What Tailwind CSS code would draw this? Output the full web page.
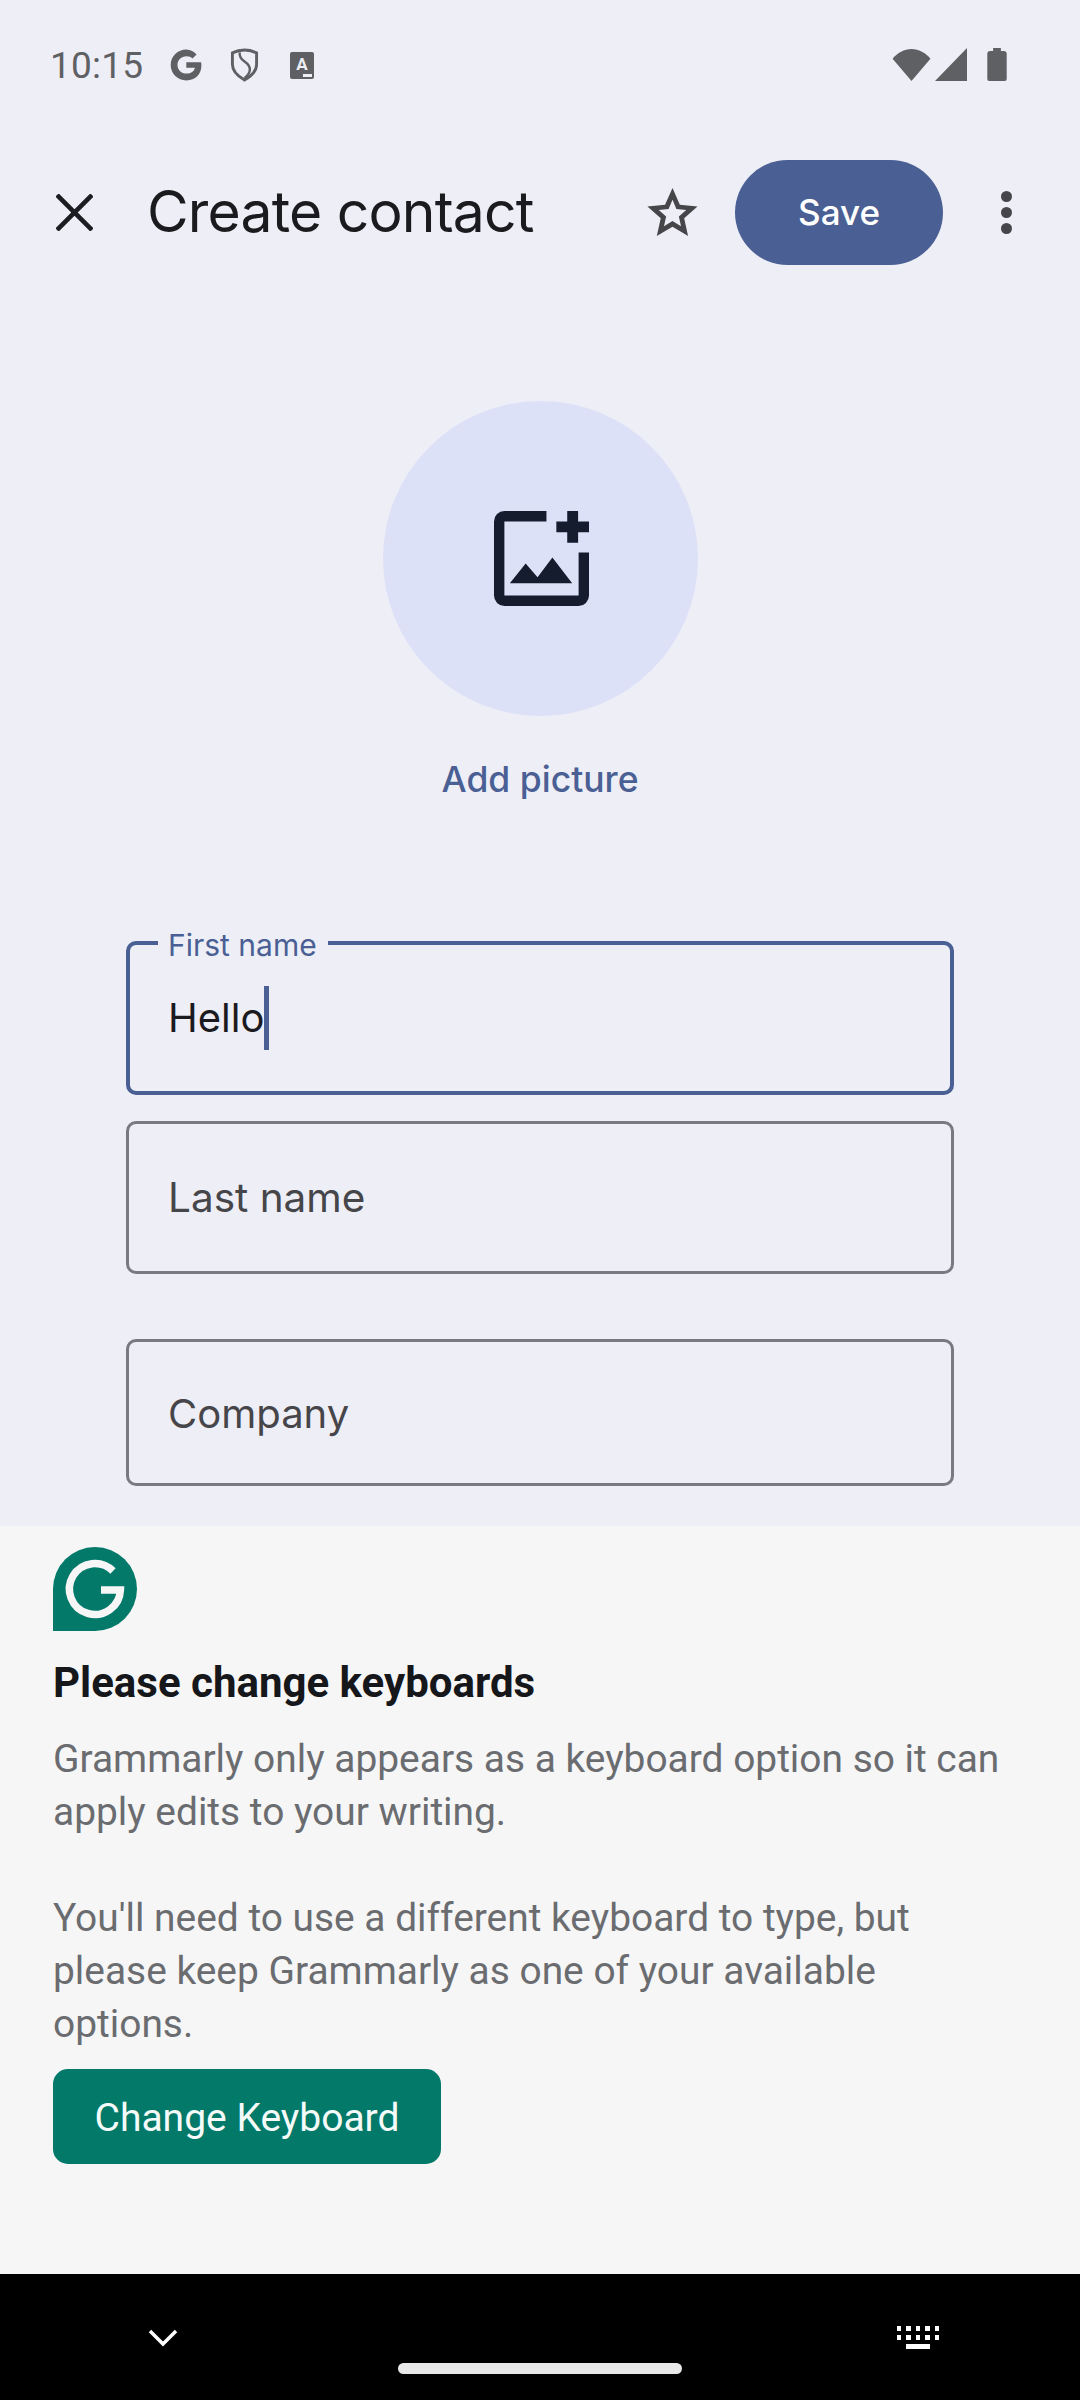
<!doctype html>
<html lang="en">
  <head>
    <meta charset="UTF-8" />
    <script src="https://cdn.jsdelivr.net/npm/@tailwindcss/browser@4"></script>
    <title>Create contact</title>
  </head>
  <body class="w-[1080px] h-[2400px] overflow-hidden flex flex-col bg-[#eeeef6] font-['Roboto',sans-serif]">
    <!-- contacts app, dimmed behind the grammarly panel -->
    <div class="h-[1526px] shrink-0 flex flex-col overflow-hidden">
      <div class="h-[130px] shrink-0 flex items-center pl-[50px] pr-[73px] text-[#5f6064]">
        <span class="text-[37px] tracking-[0.2px] w-[119px] pt-[2px]">10:15</span>
        <svg class="w-[34px] h-[34px]" viewBox="0 0 34 34"><path fill="#5f6064" d="M17.300 14.200v5.600h8.600c-.8 3.600-4 5.800-8.400 5.800-5.200 0-9-3.900-9-8.700s3.800-8.700 9-8.700c2.500 0 4.500.9 6 2.300l4.100-4.100C25 3.800 21.600 1.600 17.400 1.600 8.700 1.600 1.700 8.400 1.700 17s7 15.400 15.700 15.400c9 0 15-6.100 15-14.800 0-1.200-.1-2.400-.3-3.400z"/></svg>
        <svg class="w-[29px] h-[36px] ml-[27px]" viewBox="0 0 30 36" fill="none" stroke="#5f6064"><path stroke-width="3" d="M15 2.500c4 0 8.500 1 12.500 3v12c0 6.500-4.500 11.500-12.500 16C7 29 2.500 24 2.500 17.500v-12c4-2 8.500-3 12.500-3z"/><path stroke-width="2.500" d="M10 5c-.5 5 2 7.500 5 9.500s6 4.500 5.500 9c-.3 2-1.500 5-5.500 8"/></svg>
        <div class="relative w-[24px] h-[27px] ml-[31px] bg-[#5f6064] rounded-[2px] flex justify-center text-[#eeeef6] text-[17px] font-bold leading-[24px]">A<span class="absolute left-[13px] bottom-[2px] w-[9px] h-[3px] bg-[radial-gradient(circle,#eeeef6_1.5px,transparent_1.5px)] bg-[length:3px_3px]"></span></div>
        <div class="ml-auto flex items-center mt-[-2px]">
          <svg class="w-[39px] h-[33px]" viewBox="0 0 39 34"><path fill="#5f6064" d="M0 11C5 5 12 1 19.500 1S34 5 39 11L19.500 34z"/></svg>
          <svg class="w-[32px] h-[33px] ml-[4px]" viewBox="0 0 33 34"><path fill="#5f6064" d="M33 0v34H0z"/></svg>
          <svg class="w-[20px] h-[33px] ml-[20px]" viewBox="0 0 20 34"><path fill="#5f6064" d="M6 0h8v3h3a3 3 0 0 1 3 3v26a2 2 0 0 1-2 2H2a2 2 0 0 1-2-2V6a3 3 0 0 1 3-3h3z"/></svg>
        </div>
      </div>
      <div class="h-[105px] mt-[30px] shrink-0 flex items-center">
        <svg class="w-[37px] h-[37px] ml-[56px]" viewBox="0 0 36 36" stroke="#1c1d21" stroke-width="4.500" fill="none"><path d="M1 1l34 34M35 1L1 35"/></svg>
        <span class="ml-[54px] mt-[-2px] text-[57px] tracking-[-0.8px] text-[#1b1b1f] font-['Inter',sans-serif] w-[500px] whitespace-nowrap">Create contact</span>
        <svg class="w-[51px] h-[49px]" viewBox="0 0 52 50"><path fill="#46464a" fill-rule="evenodd" d="M26 0l7.500 17 18 1.800-13.600 12 4 18.200L26 39.500 10 49l4-18.200L.400 18.800l18-1.800zm0 12l-4 9.400-10 1 7.500 6.600-2.200 10L26 33.800l8.700 5.200-2.200-10 7.500-6.600-10-1z"/></svg>
        <div class="w-[208px] h-[105px] ml-[37px] rounded-full bg-[#4a5f93] text-white text-[35px] font-medium font-['Inter',sans-serif] flex items-center justify-center">Save</div>
        <div class="ml-[58px] flex flex-col gap-[5px]">
          <span class="w-[11px] h-[11px] rounded-full bg-[#46464a]"></span>
          <span class="w-[11px] h-[11px] rounded-full bg-[#46464a]"></span>
          <span class="w-[11px] h-[11px] rounded-full bg-[#46464a]"></span>
        </div>
      </div>
      <div class="flex flex-col items-center mt-[136px]">
        <div class="w-[315px] h-[315px] rounded-full bg-[#dde1f8] flex items-center justify-center">
          <svg class="w-[95px] h-[95px] ml-[2px]" viewBox="0 0 96 96" fill="#151c2e"><path d="M53 0v10.500H10.500v75h75V42H96v43.500A10.500 10.500 0 0 1 85.500 96h-75A10.500 10.500 0 0 1 0 85.500v-75A10.500 10.500 0 0 1 10.500 0z"/><path d="M74 0h11v10.500h11v11H85V32H74V21.500H63v-11h11z"/><path d="M16 73l16-20 12 14 15-20 20 26z"/></svg>
        </div>
        <span class="mt-[42px] text-[35.500px] font-medium text-[#4a5f93] font-['Inter',sans-serif] leading-[44px]">Add picture</span>
      </div>
      <div class="relative mx-[126px] mt-[139px] h-[154px] shrink-0 rounded-[10px] border-[4px] border-[#4a5f93] flex items-center pl-[38px] text-[40px] text-[#1b1b1f] font-['Inter',sans-serif]">
        <span class="absolute left-[28px] top-[-15px] w-[170px] h-[30px] pl-[10px] bg-[#eeeef6] text-[#4a5f93] text-[30px] leading-[30px]">First name</span>
        Hello<span class="w-[5px] h-[64px] bg-[#4a5f93]"></span>
      </div>
      <div class="mx-[126px] mt-[26px] h-[153px] shrink-0 rounded-[10px] border-[3px] border-[#79797f] flex items-center pl-[39px] pt-[2px] text-[40.500px] text-[#46464a] font-['Inter',sans-serif]">Last name</div>
      <div class="mx-[126px] mt-[65px] h-[147px] shrink-0 rounded-[10px] border-[3px] border-[#79797f] flex items-center pl-[39px] pt-[2px] text-[40px] text-[#46464a] font-['Inter',sans-serif]">Company</div>
    </div>
    <!-- grammarly panel -->
    <div class="h-[748px] shrink-0 bg-[#f6f6f7] pl-[53px] pt-[21px] flex flex-col items-start">
      <svg class="w-[84px] h-[84px]" viewBox="0 0 84 84"><path fill="#03796a" d="M0 84V42a42 42 0 1 1 42 42z"/><path fill="none" stroke="#f6f6f7" stroke-width="7.500" d="M60 24A25.500 25.500 0 1 0 67.400 43H48" /></svg>
      <h2 class="mt-[22px] text-[42px] leading-[60px] font-bold text-[#15171a]">Please change keyboards</h2>
      <p class="mt-[19px] text-[38.900px] leading-[53px] text-[#6a6c70] w-[1000px]">Grammarly only appears as a keyboard option so it can<br />apply edits to your writing.</p>
      <p class="mt-[53px] text-[38.900px] leading-[53px] text-[#6a6c70] w-[1000px]">You'll need to use a different keyboard to type, but<br />please keep Grammarly as one of your available<br />options.</p>
      <div class="mt-[19px] w-[388px] h-[95px] rounded-[15px] bg-[#03796a] pt-[3px] text-[#f4fbf9] text-[39px] flex items-center justify-center">Change Keyboard</div>
    </div>
    <!-- nav bar -->
    <div class="relative flex-1 bg-black">
      <svg class="absolute left-[148px] top-[55px] w-[30px] h-[18px]" viewBox="0 0 30 18" fill="none" stroke="#fff" stroke-width="3.500"><path d="M2 2l13 13L28 2"/></svg>
      <div class="absolute left-[897px] top-[52px] w-[42px] grid grid-cols-5 gap-x-[5px] gap-y-[4px]">
        <span class="h-[5px] bg-white"></span><span class="h-[5px] bg-white"></span><span class="h-[5px] bg-white"></span><span class="h-[5px] bg-white"></span><span class="h-[5px] bg-white"></span>
        <span class="h-[5px] bg-white"></span><span class="h-[5px] bg-white"></span><span class="h-[5px] bg-white"></span><span class="h-[5px] bg-white"></span><span class="h-[5px] bg-white"></span>
        <span class="col-start-2 col-span-3 h-[5px] bg-white"></span>
      </div>
      <div class="absolute left-[398px] top-[89px] w-[284px] h-[11px] rounded-full bg-[#e8e8e8]"></div>
    </div>
  </body>
</html>
